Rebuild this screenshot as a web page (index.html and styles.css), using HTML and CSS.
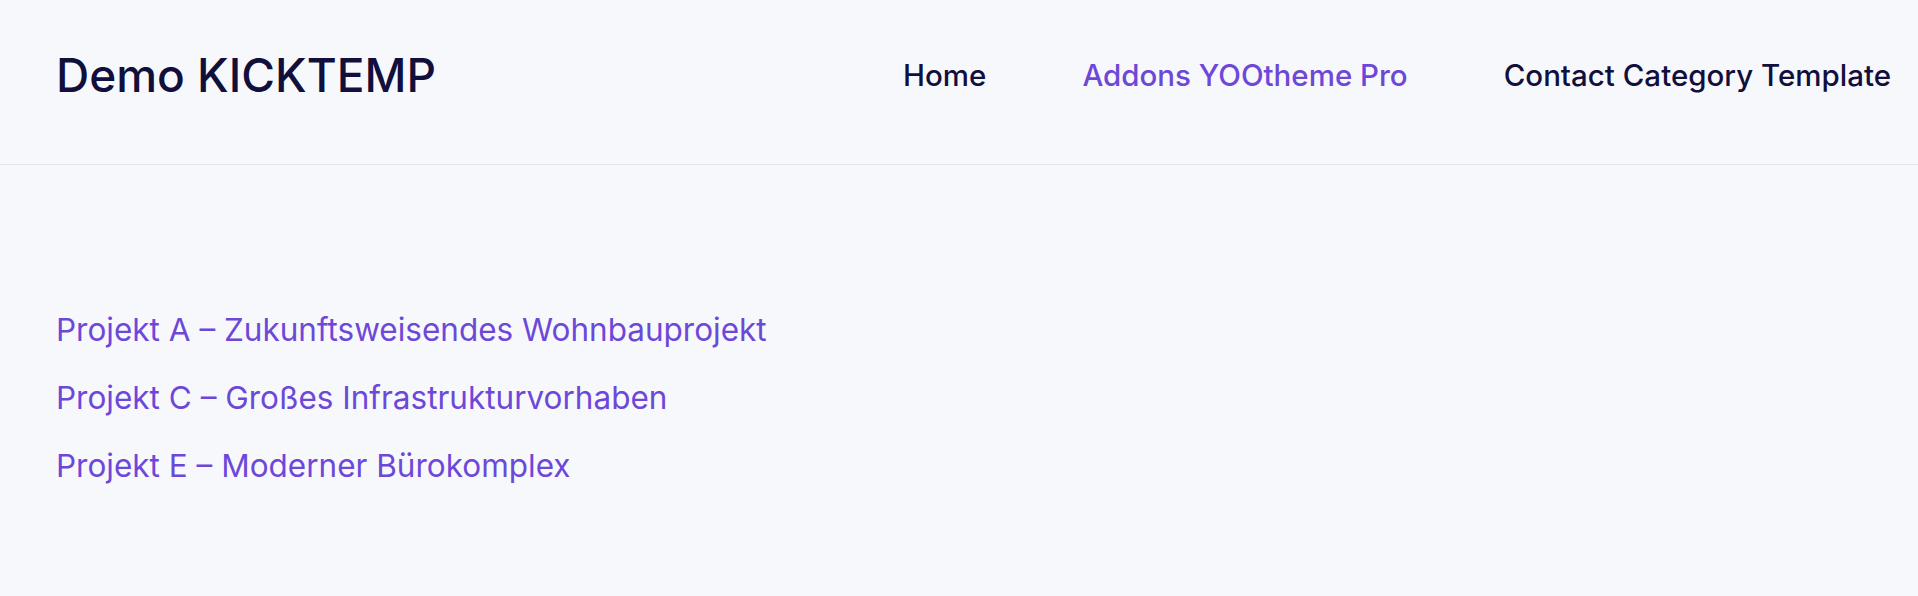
FILE: index.html
```html
<!DOCTYPE html>
<html lang="de">
<head>
<meta charset="utf-8">
<title>Demo KICKTEMP</title>
<link rel="stylesheet" href="styles.css">
</head>
<body>
<header class="header">
  <a class="logo" href="#">Demo KICKTEMP</a>
  <nav class="nav">
    <a class="nav-item" href="#">Home</a>
    <a class="nav-item active" href="#">Addons YOOtheme Pro</a>
    <a class="nav-item" href="#">Contact Category Template</a>
  </nav>
</header>
<main class="main">
  <ul class="list">
    <li><a href="#">Projekt A – Zukunftsweisendes Wohnbauprojekt</a></li>
    <li><a href="#">Projekt C – Großes Infrastrukturvorhaben</a></li>
    <li><a href="#">Projekt E – Moderner Bürokomplex</a></li>
  </ul>
</main>
</body>
</html>
```
FILE: styles.css
```css
html, body {
  margin: 0;
  padding: 0;
}
body {
  background: #f7f8fc;
  font-family: Inter, "Noto Sans", sans-serif;
  color: #110f3b;
  height: 596px;
  overflow: hidden;
}
a {
  text-decoration: none;
  color: inherit;
}
.header {
  display: flex;
  justify-content: space-between;
  align-items: center;
  height: 150px;
  padding: 0 27px 14px 56px;
  border-bottom: 1px solid #e3e5ec;
}
.logo {
  font-size: 46px;
  font-weight: 500;
  color: #110f3b;
  letter-spacing: 0;
}
.nav {
  display: flex;
  gap: 96px;
}
.nav-item {
  font-size: 29.5px;
  font-weight: 500;
  color: #110f3b;
}
.nav-item.active {
  color: #6d48d8;
}
.main {
  padding: 142px 56px 0;
}
.list {
  list-style: none;
  margin: 0;
  padding: 0;
  display: flex;
  flex-direction: column;
  gap: 23px;
}
.list li {
  font-size: 31.5px;
  line-height: 45px;
}
.list a {
  color: #6d48d8;
}
```
